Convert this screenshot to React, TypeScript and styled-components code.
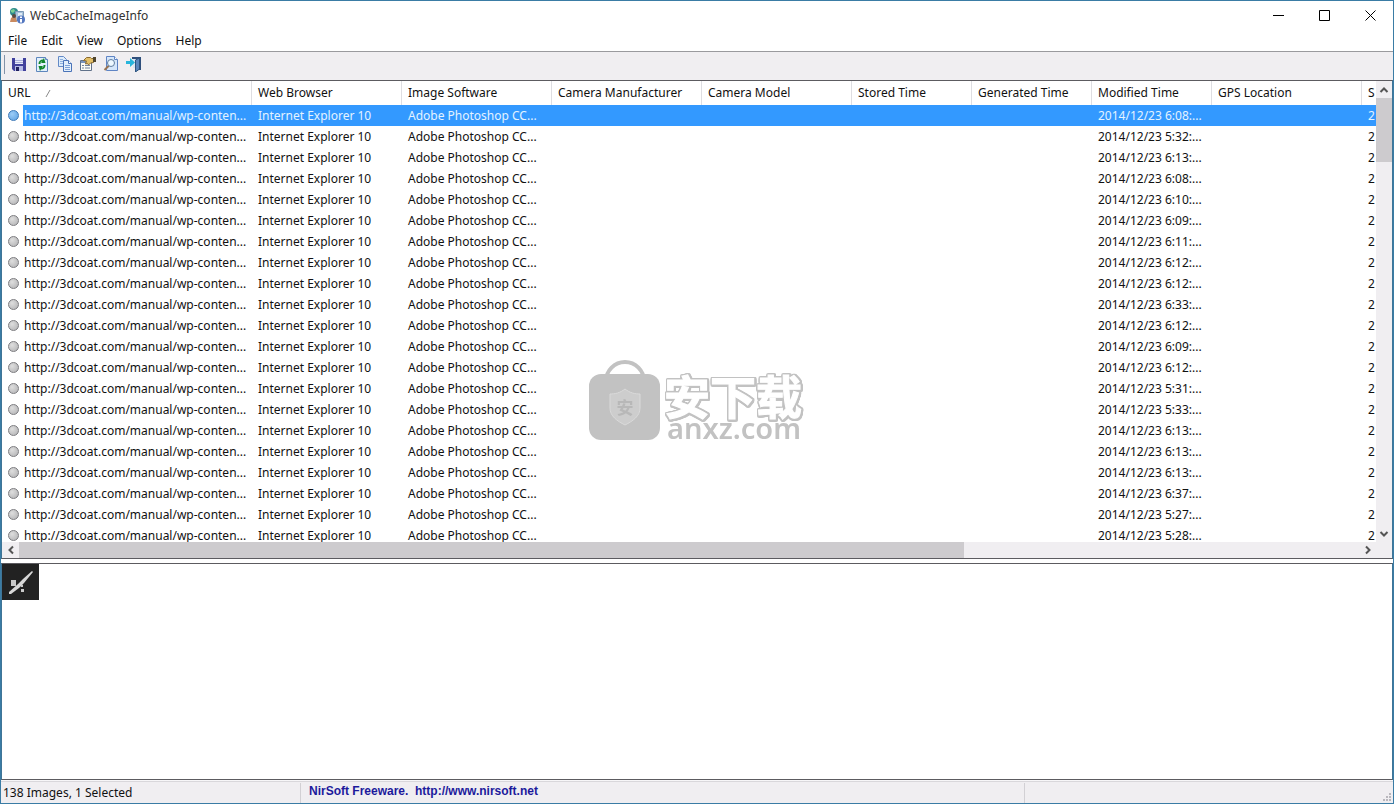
import React from 'react';
import styled, { createGlobalStyle, css } from 'styled-components';

const GlobalStyle = createGlobalStyle`
  * { box-sizing: border-box; }
  body { margin: 0; background: #fff; }
`;

const Window = styled.div`
  display: flex;
  flex-direction: column;
  height: 100vh;
  min-height: 320px;
  overflow: hidden;
  border: 1px solid #3a7ca5;
  background: #fff;
  color: #111;
  font: 12px/20px 'Noto Sans', 'Noto Sans CJK SC', sans-serif;
`;

const TitleBar = styled.header`
  display: flex;
  align-items: center;
  flex: none;
  height: 30px;
  padding-left: 8px;
`;

const Title = styled.h1`
  flex: 1;
  margin: 0 0 0 5px;
  font-size: 12px;
  font-weight: 400;
  color: #333;
`;

const Caption = styled.button`
  display: flex;
  align-items: center;
  justify-content: center;
  align-self: flex-start;
  width: 46px;
  height: 28px;
  padding: 0;
  border: 0;
  background: none;
`;

const MenuBar = styled.nav`
  display: flex;
  flex: none;
  height: 21px;
  border-bottom: 1px solid #9a9a9e;
`;

const MenuItem = styled.button`
  height: 20px;
  padding: 0 7px;
  border: 0;
  background: none;
  color: #111;
  font: inherit;
`;

const Toolbar = styled.div`
  display: flex;
  flex: none;
  height: 28px;
  padding: 2px 0 0 3px;
  background: #f0eef1;
`;

const Gripper = styled.span`
  width: 1px;
  height: 19px;
  margin: 1px 2px 0 0;
  background: #8292a8;
`;

const ToolButton = styled.button`
  display: flex;
  align-items: center;
  justify-content: center;
  width: 23px;
  height: 20px;
  padding: 0;
  border: 0;
  background: none;
`;

const ListPane = styled.main`
  display: grid;
  grid-template-columns: minmax(0, 1fr) 16px;
  grid-template-rows: minmax(0, 1fr) 16px;
  flex: 477 1 0;
  min-height: 0;
  border: 1px solid #3f7597;
  border-top-color: #5c5b60;
  border-bottom-color: #5c5b60;
`;

const Viewport = styled.div`
  overflow: hidden;
`;

const Table = styled.table`
  width: 1480px;
  table-layout: fixed;
  border-collapse: separate;
  border-spacing: 0;
`;

const Col = styled.col<{ $w: number }>`
  width: ${(p) => p.$w}px;
`;

const HeadCell = styled.th`
  height: 24px;
  padding: 0 6px;
  border-right: 1px solid #dedee2;
  font-weight: 400;
  text-align: left;
  white-space: nowrap;
`;

const SortMark = styled.svg`
  margin-left: 14px;
`;

const Row = styled.tr<{ $selected: boolean }>`
  height: 21px;
  ${(p) =>
    p.$selected &&
    css`
      color: #e4f3ff;
      background: linear-gradient(90deg, #fff 21px, #3399ff 21px);
    `}
`;

const Cell = styled.td`
  padding: 0 0 0 6px;
  line-height: 20px;
  white-space: nowrap;
`;

const UrlBox = styled.span`
  display: flex;
  align-items: center;
  gap: 5px;
`;

const Bullet = styled.span<{ $selected: boolean }>`
  flex: none;
  width: 11px;
  height: 11px;
  border: 1px solid ${(p) => (p.$selected ? '#3d79b8' : '#7c7c80')};
  border-radius: 50%;
  background: ${(p) =>
    p.$selected
      ? 'radial-gradient(circle at 35% 35%, #9ccdf8, #5b9fe0)'
      : 'radial-gradient(circle at 35% 35%, #dedede, #b0b0b2)'};
`;

const ScrollBar = styled.div<{ $vertical?: boolean }>`
  display: flex;
  flex-direction: ${(p) => (p.$vertical ? 'column' : 'row')};
  background: #f0eef1;
`;

const ScrollButton = styled.button`
  display: flex;
  align-items: center;
  justify-content: center;
  flex: 0 0 17px;
  padding: 0;
  border: 0;
  background: none;
`;

const Track = styled.div<{ $vertical?: boolean }>`
  display: flex;
  flex-direction: ${(p) => (p.$vertical ? 'column' : 'row')};
  flex: 1;
`;

const Thumb = styled.div<{ $share: number }>`
  flex: 0 0 ${(p) => p.$share}%;
  background: #cdcbce;
`;

const Corner = styled.div`
  background: #f0eef1;
`;

const Splitter = styled.div`
  flex: none;
  height: 4px;
`;

const Preview = styled.section`
  flex: 215 1 0;
  min-height: 0;
  overflow: hidden;
  border: 1px solid #3f7597;
  border-top-color: #5c5b60;
  border-bottom-color: #5c5b60;
`;

const StatusBar = styled.footer`
  display: flex;
  flex: none;
  height: 23px;
  padding-top: 3px;
  background: linear-gradient(#f7f6f8 1px, #d9d7db 1px, #d9d7db 2px, #f0eef1 2px);
`;

const StatusCell = styled.div<{ $w?: number }>`
  flex: ${(p) => (p.$w ? `0 1 ${p.$w}px` : '1')};
  padding-left: 2px;
  border-right: 1px solid #d2d0d4;
  white-space: nowrap;
`;

const GripCell = styled.div`
  display: flex;
  flex: 0 0 368px;
  align-items: flex-end;
  justify-content: flex-end;
  padding: 0 2px 2px 0;
`;

const SiteLink = styled.a`
  display: block;
  padding-left: 6px;
  color: #1c1a9c;
  font: bold 12px/16px 'Liberation Sans', sans-serif;
  text-decoration: none;
  white-space: pre;
`;

const Watermark = styled.div`
  position: fixed;
  top: 50%;
  left: 50%;
  display: flex;
  gap: 4px;
  width: 216px;
  height: 84px;
  margin: -42px 0 0 -108px;
  pointer-events: none;
  color: #c2c2c2;
`;

const WatermarkText = styled.div`
  padding-top: 12px;
  white-space: nowrap;
`;

const BrandName = styled.div`
  color: #fff;
  font: 700 46px/44px 'Noto Sans CJK SC', sans-serif;
  -webkit-text-stroke: 1px #fff;
  paint-order: stroke fill;
  filter: drop-shadow(1px 0 #c2c2c2) drop-shadow(-1px 0 #c2c2c2) drop-shadow(0 1px #c2c2c2)
    drop-shadow(0 -1px #c2c2c2) drop-shadow(1px 0 #c2c2c2) drop-shadow(0 1px #c2c2c2);
`;

const BrandHost = styled.div`
  padding-left: 3px;
  font: 600 29px/24px 'Noto Sans', sans-serif;
`;

const AppIcon = () => (
  <svg width="16" height="16" viewBox="0 0 16 16" aria-hidden="true">
    <circle cx="5" cy="4" r="4" fill="#2f8b8c" />
    <path d="M2 2l3-1 1 2-2 2-2-1zM6 5l2-1v2L6 8z" fill="#7ccf95" />
    <path d="M6.500 3.500h8v9h-8z" fill="#a9c3dc" stroke="#7c98b5" />
    <path d="M9 5h4v3H9z" fill="#e2edf6" />
    <path d="M1 14l1-4 3-2 2 2 1 4z" fill="#c98a60" />
    <circle cx="5" cy="8" r="2" fill="#5d4a42" />
    <circle cx="12" cy="11.500" r="4" fill="#5377c0" />
    <path d="M11 8.500h2v1.500h-2zM11 11h2v3.500h-2z" fill="#fff" />
  </svg>
);

const SaveIcon = () => (
  <svg width="16" height="16" viewBox="0 0 16 16" aria-hidden="true">
    <path d="M1 2h14v13H3l-2-2z" fill="#41419c" />
    <path d="M4 2h8v6H4z" fill="#e9ebfa" />
    <path d="M4 4.500h8M4 6.500h8" stroke="#a9aed8" />
    <path d="M4 10h8v5H4z" fill="#b7bce6" />
    <path d="M5 11h3v4H5z" fill="#20205e" />
  </svg>
);

const RefreshIcon = () => (
  <svg width="16" height="16" viewBox="0 0 16 16" aria-hidden="true">
    <path d="M2.500 1.500h9l2 2v12h-11z" fill="#e3f0fc" stroke="#5d86bd" />
    <path d="M11.500 1.500v2h2" fill="#fff" stroke="#5d86bd" />
    <path d="M4.500 8c0-3 2-4.500 4.500-4.500l1-1.500 1.500 5H7l1-1.500C7 5.500 6.500 6 6.500 8z" fill="#11852a" />
    <path d="M11.500 9c0 3-2 4.500-4.500 4.500L6 15l-1.500-5H9l-1 1.500c1 0 1.500-.5 1.500-2.500z" fill="#11852a" />
  </svg>
);

const CopyIcon = () => (
  <svg width="16" height="16" viewBox="0 0 16 16" aria-hidden="true">
    <path d="M1.500.5h5l3 3v7h-8z" fill="#dcebfb" stroke="#6389c6" />
    <path d="M3 3.500h3M3 5.500h4M3 7.500h4" stroke="#8fb0dd" />
    <path d="M6.500 4.500h5l3 3v8h-8z" fill="#e3effc" stroke="#4a73b8" />
    <path d="M11.500 4.500v3h3" fill="#fff" stroke="#4a73b8" />
    <path d="M8 9.500h5M8 11.500h5M8 13.500h5" stroke="#7ea2d8" />
  </svg>
);

const PropertiesIcon = () => (
  <svg width="17" height="16" viewBox="0 0 17 16" aria-hidden="true">
    <path d="M1.500 4.500h11v10h-11z" fill="#fbfbf4" stroke="#60718a" />
    <path d="M2 5h5v2H2z" fill="#7a94bd" />
    <path d="M3 9.500h2M6 9.500h5M3 12h2M6 12h5" stroke="#71809b" />
    <path d="M4.500 4.500l3-3h4l1 1h2v4l-3 .5-2 2-1-1.500-2 .5 1-3z" fill="#e3bf68" stroke="#8a6a2e" />
    <path d="M14 1h3v5h-3z" fill="#4e442e" />
  </svg>
);

const FindIcon = () => (
  <svg width="16" height="16" viewBox="0 0 16 16" aria-hidden="true">
    <path d="M3.500.5h8l3 3v11h-11z" fill="#d5e6fa" stroke="#5f84c4" />
    <path d="M11.500.5v3h3" fill="#fff" stroke="#5f84c4" />
    <path d="M6 9.500L1.500 14" stroke="#9a7350" strokeWidth="2" />
    <circle cx="8" cy="7" r="3.500" fill="#eef8ff" stroke="#5f7d9f" />
  </svg>
);

const ExitIcon = () => (
  <svg width="16" height="16" viewBox="0 0 16 16" aria-hidden="true">
    <path d="M6 1h9v13h-2V3H6z" fill="#2f4f7c" />
    <path d="M7 3h3v9H7z" fill="#dbe6f2" />
    <path d="M9.500 4l4-2v11l-4 3z" fill="#5b86bb" stroke="#2e5480" />
    <path d="M0 5h4V2l5 4.500L4 11V8H0z" fill="#27b5dc" />
  </svg>
);

const arrows = {
  up: 'M1.500 7L5 3.500 8.500 7',
  down: 'M1.500 3L5 6.500 8.500 3',
  left: 'M7 1.500L3.500 5 7 8.500',
  right: 'M3 1.500L6.500 5 3 8.500',
};

const Arrow = ({ dir }: { dir: keyof typeof arrows }) => (
  <svg width="10" height="10" viewBox="0 0 10 10" aria-hidden="true">
    <path d={arrows[dir]} fill="none" stroke="#555" strokeWidth="2" />
  </svg>
);

const Thumbnail = () => (
  <svg width="37" height="36" viewBox="0 0 37 36" role="img" aria-label="Preview">
    <path d="M0 0h37v36H0z" fill="#222" />
    <path d="M30 7l1 1-9 11-5 5-8 6-2 0 0-2 9-8 5-5z" fill="#d8d8d8" />
    <path d="M9 16h5v6H9zM19 21h2v2h-2zM19 25h3v3h-3z" fill="#c9c9c9" />
  </svg>
);

const Bag = () => (
  <svg width="71" height="82" viewBox="0 0 71 82" aria-hidden="true">
    <path d="M17 21a19 19 0 0 1 38 0" fill="none" stroke="#c2c2c2" strokeWidth="4" />
    <rect y="14" width="71" height="66" rx="12" fill="#c2c2c2" />
    <path d="M36 29c5 4 10 5 15 5v14c0 8-7 13-15 17-8-4-15-9-15-17V34c5 0 10-1 15-5z" fill="#cdcdcd" stroke="#dadada" />
    <text x="36" y="54" textAnchor="middle" fontFamily="Noto Sans CJK SC, sans-serif" fontSize="17" fontWeight="700" fill="#b8b8b8">
      安
    </text>
  </svg>
);

const tools = [
  { label: 'Save', Icon: SaveIcon },
  { label: 'Refresh', Icon: RefreshIcon },
  { label: 'Copy', Icon: CopyIcon },
  { label: 'Properties', Icon: PropertiesIcon },
  { label: 'Find', Icon: FindIcon },
  { label: 'Exit', Icon: ExitIcon },
];

const columns = [
  { name: 'URL', width: 250 },
  { name: 'Web Browser', width: 150 },
  { name: 'Image Software', width: 150 },
  { name: 'Camera Manufacturer', width: 150 },
  { name: 'Camera Model', width: 150 },
  { name: 'Stored Time', width: 120 },
  { name: 'Generated Time', width: 120 },
  { name: 'Modified Time', width: 120 },
  { name: 'GPS Location', width: 150 },
  { name: 'S', width: 120 },
];

const times = [
  '6:08', '5:32', '6:13', '6:08', '6:10', '6:09', '6:11', '6:12', '6:12', '6:33', '6:12',
  '6:09', '6:12', '5:31', '5:33', '6:13', '6:13', '6:13', '6:37', '5:27', '5:28',
];

export default function App() {
  return (
    <Window>
      <GlobalStyle />
      <TitleBar>
        <AppIcon />
        <Title>WebCacheImageInfo</Title>
        <Caption aria-label="Minimize">
          <svg width="11" height="11"><path d="M0 5.500h11" stroke="#000" /></svg>
        </Caption>
        <Caption aria-label="Maximize">
          <svg width="11" height="11"><path d="M.5.5h10v10H.5z" fill="none" stroke="#000" /></svg>
        </Caption>
        <Caption aria-label="Close">
          <svg width="11" height="11"><path d="M.5.5l10 10M10.500.5l-10 10" stroke="#000" /></svg>
        </Caption>
      </TitleBar>
      <MenuBar>
        {['File', 'Edit', 'View', 'Options', 'Help'].map((m) => (
          <MenuItem key={m}>{m}</MenuItem>
        ))}
      </MenuBar>
      <Toolbar>
        <Gripper />
        {tools.map(({ label, Icon }) => (
          <ToolButton key={label} aria-label={label}><Icon /></ToolButton>
        ))}
      </Toolbar>
      <ListPane>
        <Viewport>
          <Table>
            <colgroup>
              {columns.map((c) => <Col key={c.name} $w={c.width} />)}
            </colgroup>
            <thead>
              <tr>
                {columns.map((c, i) => (
                  <HeadCell key={c.name}>
                    {c.name}
                    {i === 0 && (
                      <SortMark width="8" height="8" aria-hidden="true">
                        <path d="M1 8l4-7" stroke="#8a8a8a" />
                      </SortMark>
                    )}
                  </HeadCell>
                ))}
              </tr>
            </thead>
            <tbody>
              {times.map((time, i) => (
                <Row key={i} $selected={i === 0}>
                  <Cell>
                    <UrlBox>
                      <Bullet $selected={i === 0} />
                      http://3dcoat.com/manual/wp-conten...
                    </UrlBox>
                  </Cell>
                  <Cell>Internet Explorer 10</Cell>
                  <Cell>Adobe Photoshop CC...</Cell>
                  <Cell />
                  <Cell />
                  <Cell />
                  <Cell />
                  <Cell>2014/12/23 {time}:...</Cell>
                  <Cell />
                  <Cell>2</Cell>
                </Row>
              ))}
            </tbody>
          </Table>
        </Viewport>
        <ScrollBar $vertical>
          <ScrollButton aria-label="Scroll up"><Arrow dir="up" /></ScrollButton>
          <Track $vertical><Thumb $share={15} /></Track>
          <ScrollButton aria-label="Scroll down"><Arrow dir="down" /></ScrollButton>
        </ScrollBar>
        <ScrollBar>
          <ScrollButton aria-label="Scroll left"><Arrow dir="left" /></ScrollButton>
          <Track><Thumb $share={70.5} /></Track>
          <ScrollButton aria-label="Scroll right"><Arrow dir="right" /></ScrollButton>
        </ScrollBar>
        <Corner />
      </ListPane>
      <Splitter />
      <Preview><Thumbnail /></Preview>
      <StatusBar>
        <StatusCell $w={300}>138 Images, 1 Selected</StatusCell>
        <StatusCell>
          <SiteLink href="http://www.nirsoft.net">{'NirSoft Freeware.  http://www.nirsoft.net'}</SiteLink>
        </StatusCell>
        <GripCell>
          <svg width="8" height="8" aria-hidden="true">
            <path d="M6 0h2v2H6zM3 3h2v2H3zM6 3h2v2H6zM0 6h2v2H0zM3 6h2v2H3zM6 6h2v2H6z" fill="#b9b7bd" />
          </svg>
        </GripCell>
      </StatusBar>
      <Watermark>
        <Bag />
        <WatermarkText>
          <BrandName>安下载</BrandName>
          <BrandHost>anxz.com</BrandHost>
        </WatermarkText>
      </Watermark>
    </Window>
  );
}
